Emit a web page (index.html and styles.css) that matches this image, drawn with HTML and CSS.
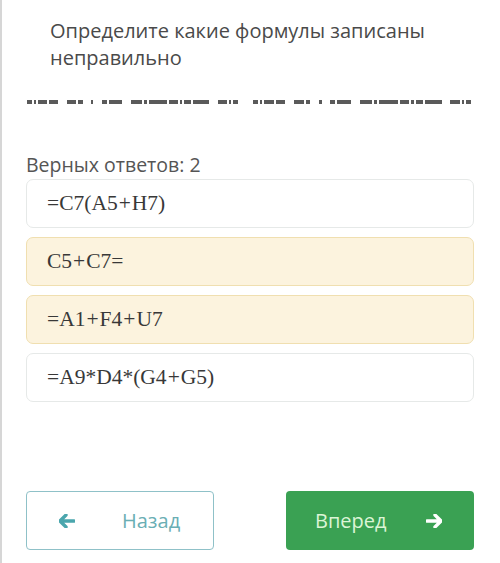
FILE: index.html
```html
<!DOCTYPE html>
<html lang="ru">
<head>
<meta charset="utf-8">
<link rel="stylesheet" href="styles.css">
</head>
<body>
<div class="page">
  <h1 class="title">Определите какие формулы записаны неправильно</h1>
  <div class="garble">
    <div class="grp g1">
      <i class="d2"></i><i class="d1"></i><i class="d4"></i><i class="d4"></i><i class="gap"></i><i class="d4"></i><i class="d2"></i><i class="gap"></i><i class="d1"></i><i class="gap"></i><i class="d2"></i><i class="d6"></i><i class="gap"></i><i class="d5"></i><i class="d1"></i><i class="d8"></i><i class="d4"></i><i class="d1"></i><i class="d3"></i><i class="d7"></i><i class="gap"></i><i class="d4"></i><i class="d1"></i><i class="d2"></i>
    </div>
    <div class="grp g2">
      <i class="d2"></i><i class="d1"></i><i class="d4"></i><i class="d4"></i><i class="gap"></i><i class="d4"></i><i class="d2"></i><i class="gap"></i><i class="d1"></i><i class="gap"></i><i class="d2"></i><i class="d6"></i><i class="gap"></i><i class="d5"></i><i class="d1"></i><i class="d8"></i><i class="d4"></i><i class="d1"></i><i class="d3"></i><i class="d7"></i><i class="gap"></i><i class="d4"></i><i class="d1"></i><i class="d2"></i>
    </div>
  </div>
  <div class="count">Верных ответов: 2</div>
  <div class="options">
    <div class="opt">=C7(A5<span class="op">+</span>H7)</div>
    <div class="opt sel">C5<span class="op">+</span>C7=</div>
    <div class="opt sel">=A1<span class="op">+</span>F4<span class="op">+</span>U7</div>
    <div class="opt">=A9*D4*(G4<span class="op">+</span>G5)</div>
  </div>
  <div class="nav">
    <button class="btn back">
      <svg class="arr" viewBox="0 0 16 14" width="16" height="14"><path d="M7 1 L1 7 L7 13 M1.5 7 H15" fill="none" stroke="currentColor" stroke-width="3.4" stroke-linecap="round" stroke-linejoin="round"/></svg>
      <span>Назад</span>
    </button>
    <button class="btn next">
      <span>Вперед</span>
      <svg class="arr" viewBox="0 0 16 14" width="16" height="14"><path d="M9 1 L15 7 L9 13 M14.5 7 H1" fill="none" stroke="currentColor" stroke-width="3.4" stroke-linecap="round" stroke-linejoin="round"/></svg>
    </button>
  </div>
</div>
</body>
</html>
```

FILE: styles.css
```css
* { box-sizing: border-box; }
html, body { margin: 0; padding: 0; background: #fff; }
body { font-family: "Open Sans", "Noto Sans", sans-serif; }
.page {
  width: 500px;
  height: 563px;
  border-left: 2px solid #d6d6d6;
  padding: 0 26px 0 24px;
  display: flex;
  flex-direction: column;
}
.title {
  margin: 17px 28px 0 24px;
  font-size: 20px;
  font-weight: 400;
  line-height: 27px;
  color: #4a4a4a;
}
.garble {
  margin-top: 29px;
  display: flex;
  gap: 15px;
  padding-left: 1px;
}
.grp { display: flex; gap: 2px; align-items: center; height: 4px; }
.g1 { width: 211px; }
.g2 { width: 218px; }
.grp i { display: block; height: 3.5px; background: #5a5a5a; flex-basis: 0; }
.grp .gap { background: transparent; flex-grow: 2; }
.d1 { flex-grow: 1; } .d2 { flex-grow: 2; } .d3 { flex-grow: 3; } .d4 { flex-grow: 4; }
.d5 { flex-grow: 5; } .d6 { flex-grow: 6; } .d7 { flex-grow: 7; } .d8 { flex-grow: 8; }
.count {
  margin-top: 48px;
  font-size: 19.5px;
  line-height: 26px;
  color: #555;
}
.options {
  margin-top: 1px;
  display: flex;
  flex-direction: column;
  gap: 9px;
}
.opt {
  height: 49px;
  border: 1px solid #e6e9e8;
  border-radius: 7px;
  padding: 0 0 1px 20px;
  display: flex;
  align-items: center;
  font-family: "Liberation Serif", "DejaVu Serif", serif;
  font-size: 21.5px;
  color: #383838;
  background: #fff;
}
.opt.sel { background: #fcf3de; border-color: #f0dfb0; }
.op { margin: 0 1px; }
.nav {
  margin-top: auto;
  margin-bottom: 13px;
  display: flex;
  justify-content: space-between;
}
.btn {
  width: 188px;
  height: 59px;
  border-radius: 4px;
  font-family: "Open Sans", "Noto Sans", sans-serif;
  font-size: 20px;
  display: flex;
  align-items: center;
  padding: 0;
}
.back {
  background: #fff;
  border: 1.5px solid #8fc1c8;
  color: #6aaeb4;
  padding-left: 32px;
}
.back .arr { color: #4aa6ad; margin-right: 47px; }
.next {
  background: #3aa153;
  border: none;
  color: #dcf5d6;
  padding-left: 29px;
}
.next .arr { color: #fff; margin-left: 39px; }
```
